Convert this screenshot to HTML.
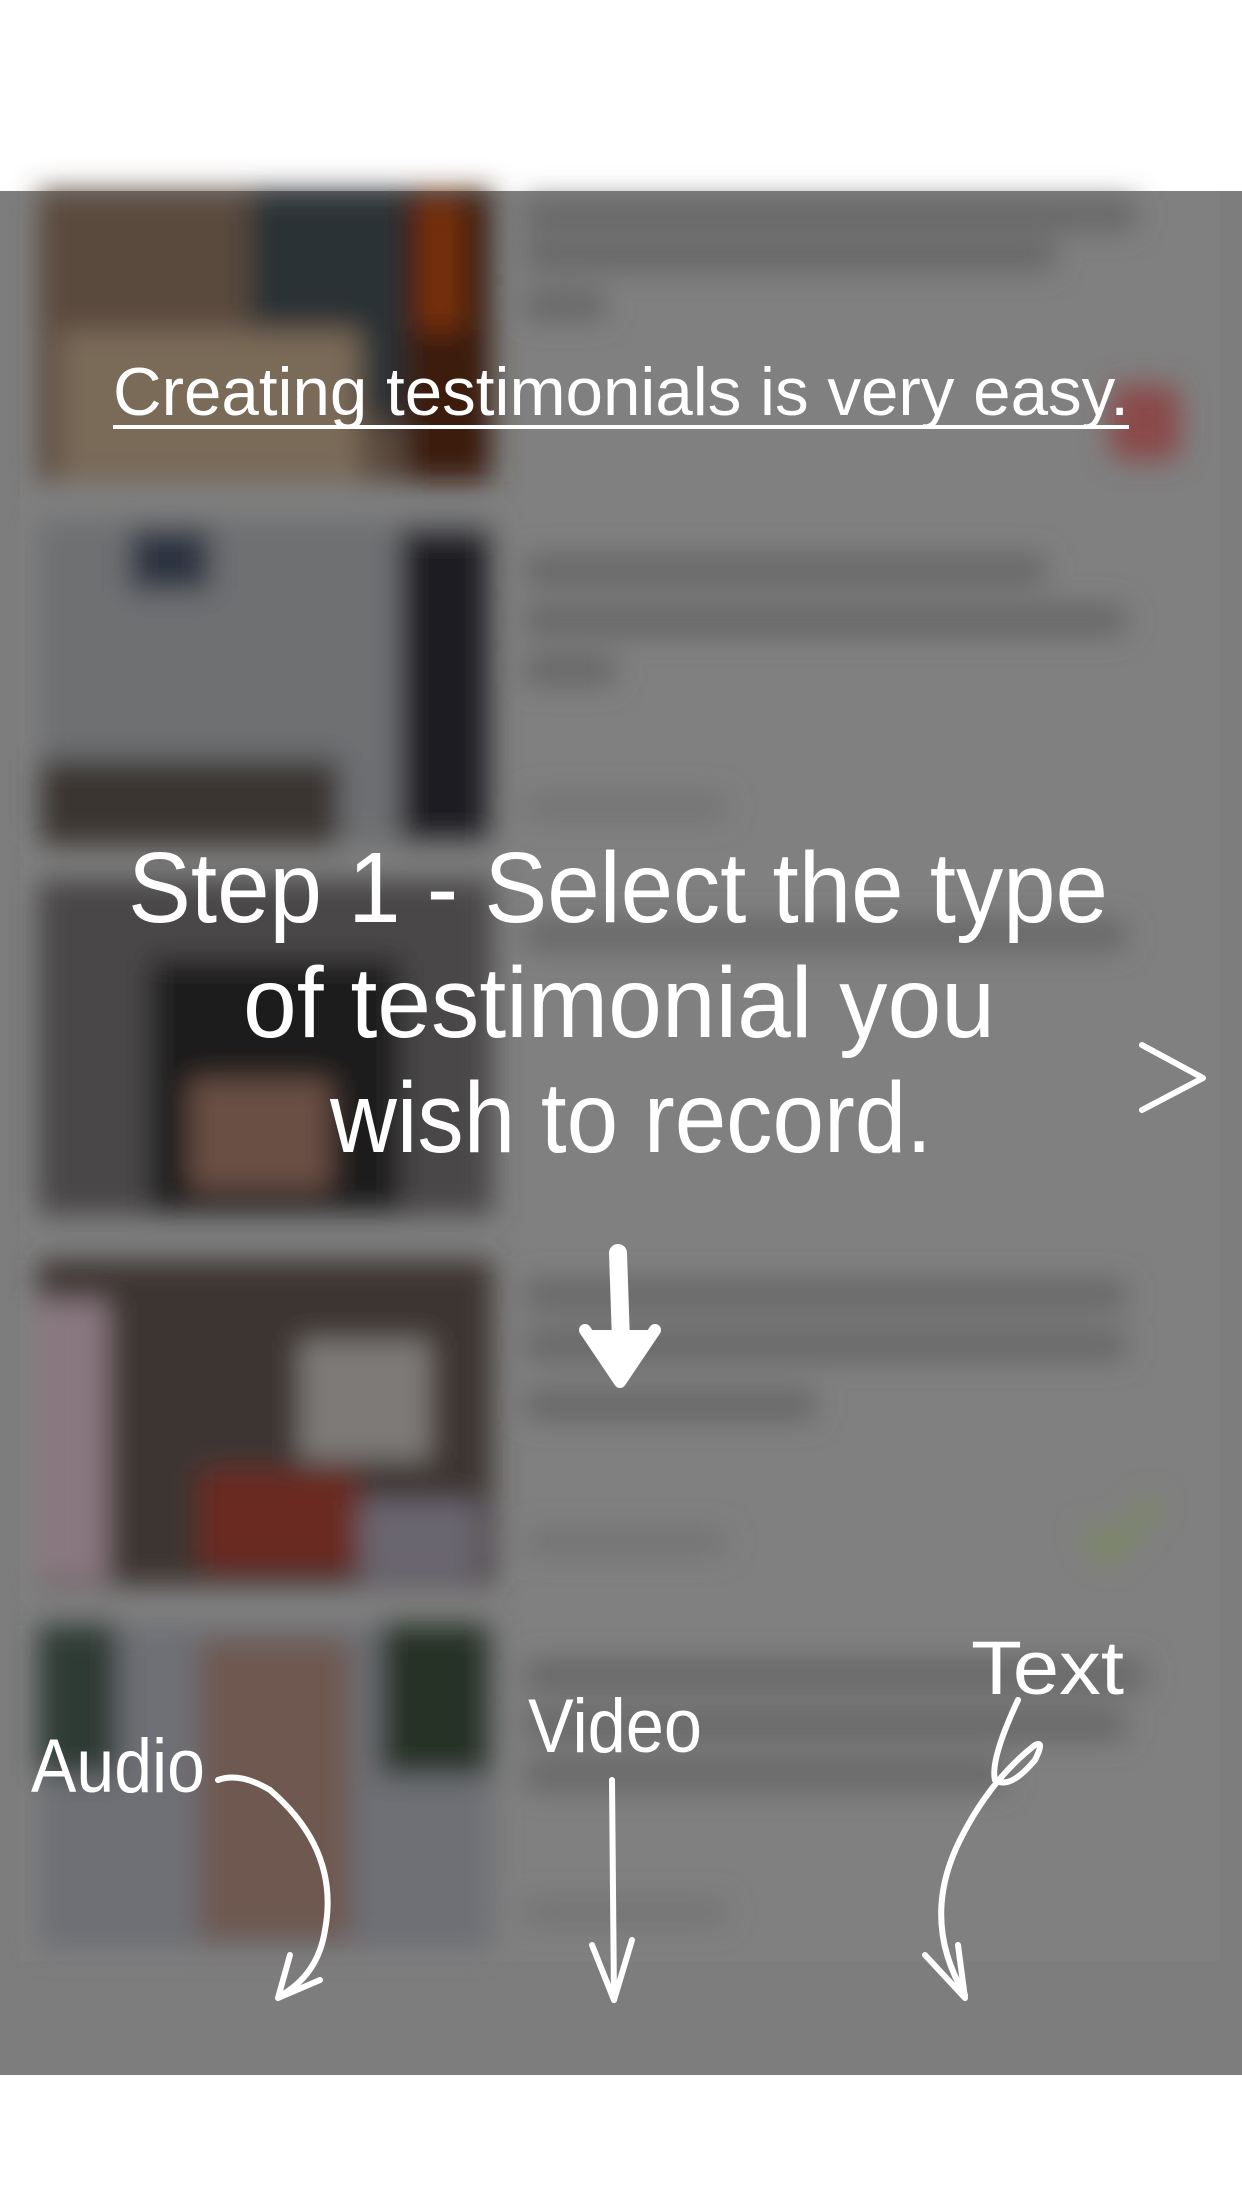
<!DOCTYPE html>
<html><head><meta charset="utf-8"><style>
html,body{margin:0;padding:0;background:#fff;}
svg{display:block}
</style></head><body>
<svg width="1242" height="2208" viewBox="0 0 1242 2208" xmlns="http://www.w3.org/2000/svg">
<defs>
<filter id="b" x="-20%" y="-20%" width="140%" height="140%"><feGaussianBlur stdDeviation="14"/></filter>
<filter id="b2"><feGaussianBlur stdDeviation="6"/></filter>
</defs>
<rect x="0" y="0" width="1242" height="2208" fill="#fff"/>
<rect x="0" y="191" width="1242" height="1884" fill="#7d7d7d"/>
<rect x="20" y="191" width="1200" height="1770" fill="#808080"/>
<g filter="url(#b)">
 <!-- row1 -->
 <rect x="38" y="191" width="455" height="290" fill="#5a4a3e"/>
 <rect x="250" y="191" width="160" height="230" fill="#2a3136"/>
 <rect x="405" y="191" width="85" height="290" fill="#3a1c10"/>
 <rect x="420" y="200" width="40" height="130" fill="#7a3010"/>
 <rect x="60" y="330" width="300" height="150" fill="#7a6a58"/>
 <rect x="1110" y="385" width="70" height="75" rx="12" fill="#8a4a4a"/>
 <!-- row2 -->
 <rect x="38" y="520" width="455" height="325" fill="#6e7072"/>
 <rect x="400" y="530" width="90" height="310" fill="#1c1c22"/>
 <rect x="40" y="760" width="300" height="85" fill="#3a3430"/>
 <rect x="130" y="530" width="80" height="60" fill="#2a3040"/>
 <!-- row3 -->
 <rect x="38" y="880" width="455" height="335" fill="#4a4646"/>
 <rect x="150" y="960" width="250" height="250" fill="#1a1a1e"/>
 <rect x="190" y="1080" width="140" height="110" fill="#6a4f45"/>
 <!-- row4 -->
 <rect x="38" y="1260" width="455" height="325" fill="#3e3632"/>
 <rect x="38" y="1300" width="70" height="280" fill="#8a7880"/>
 <rect x="200" y="1470" width="160" height="100" fill="#6a2a20"/>
 <rect x="300" y="1340" width="130" height="120" fill="#7e7a78"/>
 <rect x="360" y="1500" width="120" height="80" fill="#6a6670"/>
 <!-- row5 -->
 <rect x="38" y="1625" width="455" height="325" fill="#6e7074"/>
 <rect x="38" y="1625" width="80" height="150" fill="#2e3a34"/>
 <rect x="380" y="1625" width="110" height="150" fill="#263228"/>
 <rect x="200" y="1640" width="150" height="300" fill="#6e5850"/>
 <!-- text blocks -->
 <g fill="#666">
  <rect x="525" y="200" width="610" height="30"/>
  <rect x="525" y="240" width="530" height="30"/>
  <rect x="525" y="290" width="80" height="30"/>
  <rect x="525" y="555" width="520" height="30"/>
  <rect x="525" y="605" width="600" height="30"/>
  <rect x="525" y="655" width="90" height="30"/>
  <rect x="525" y="920" width="600" height="30"/>
  <rect x="525" y="1280" width="600" height="30"/>
  <rect x="525" y="1330" width="600" height="30"/>
  <rect x="525" y="1390" width="290" height="30"/>
  <rect x="525" y="1660" width="620" height="30"/>
  <rect x="525" y="1710" width="600" height="30"/>
  <rect x="525" y="1760" width="480" height="30"/>
 </g>
 <g fill="#727272">
  <rect x="525" y="795" width="200" height="24"/>
  <rect x="525" y="1530" width="200" height="24"/>
  <rect x="525" y="1900" width="200" height="24"/>
 </g>
 <path d="M1085 1530 l25 25 l45 -55" stroke="#7a8a5a" stroke-width="14" fill="none"/>
</g>
<g fill="#fff" font-family="'Liberation Sans Narrow','Liberation Sans',sans-serif">
 <text x="113" y="415" font-size="68" textLength="1016" lengthAdjust="spacingAndGlyphs">Creating testimonials is very easy.</text>
 <rect x="113" y="425" width="1016" height="4"/>
 <text x="128" y="922" font-size="100" textLength="980" lengthAdjust="spacingAndGlyphs">Step 1 - Select the type</text>
 <text x="243" y="1037" font-size="100" textLength="752" lengthAdjust="spacingAndGlyphs">of testimonial you</text>
 <text x="330" y="1152" font-size="100" textLength="602" lengthAdjust="spacingAndGlyphs">wish to record.</text>
 <text x="31" y="1792" font-size="76" textLength="174" lengthAdjust="spacingAndGlyphs">Audio</text>
 <text x="528" y="1752" font-size="76" textLength="174" lengthAdjust="spacingAndGlyphs">Video</text>
 <text x="971" y="1694" font-size="76" textLength="153" lengthAdjust="spacingAndGlyphs">Text</text>
</g>
<g stroke="#fff" fill="none" stroke-linecap="round" stroke-linejoin="round">
 <path d="M1142 1045 L1203 1078 L1142 1110" stroke-width="6"/>
 <path d="M618 1253 L622 1370" stroke-width="18"/>
 <path d="M585 1330 L620 1382 L655 1330" stroke-width="12" fill="#fff"/>
 <path d="M218 1780 Q240 1772 270 1790 Q340 1850 325 1930 Q318 1975 280 1996" stroke-width="6"/>
 <path d="M290 1955 L278 1998 L320 1980" stroke-width="6"/>
 <path d="M612 1780 L614 2000" stroke-width="6"/>
 <path d="M592 1945 L614 2000 L632 1940" stroke-width="6"/>
 <path d="M1018 1700 Q990 1760 995 1780 Q1010 1790 1035 1760 Q1045 1740 1035 1745 Q990 1780 960 1840 Q920 1920 965 1995" stroke-width="6"/>
 <path d="M925 1955 L965 1998 L958 1945" stroke-width="6"/>
</g>
</svg>
</body></html>
